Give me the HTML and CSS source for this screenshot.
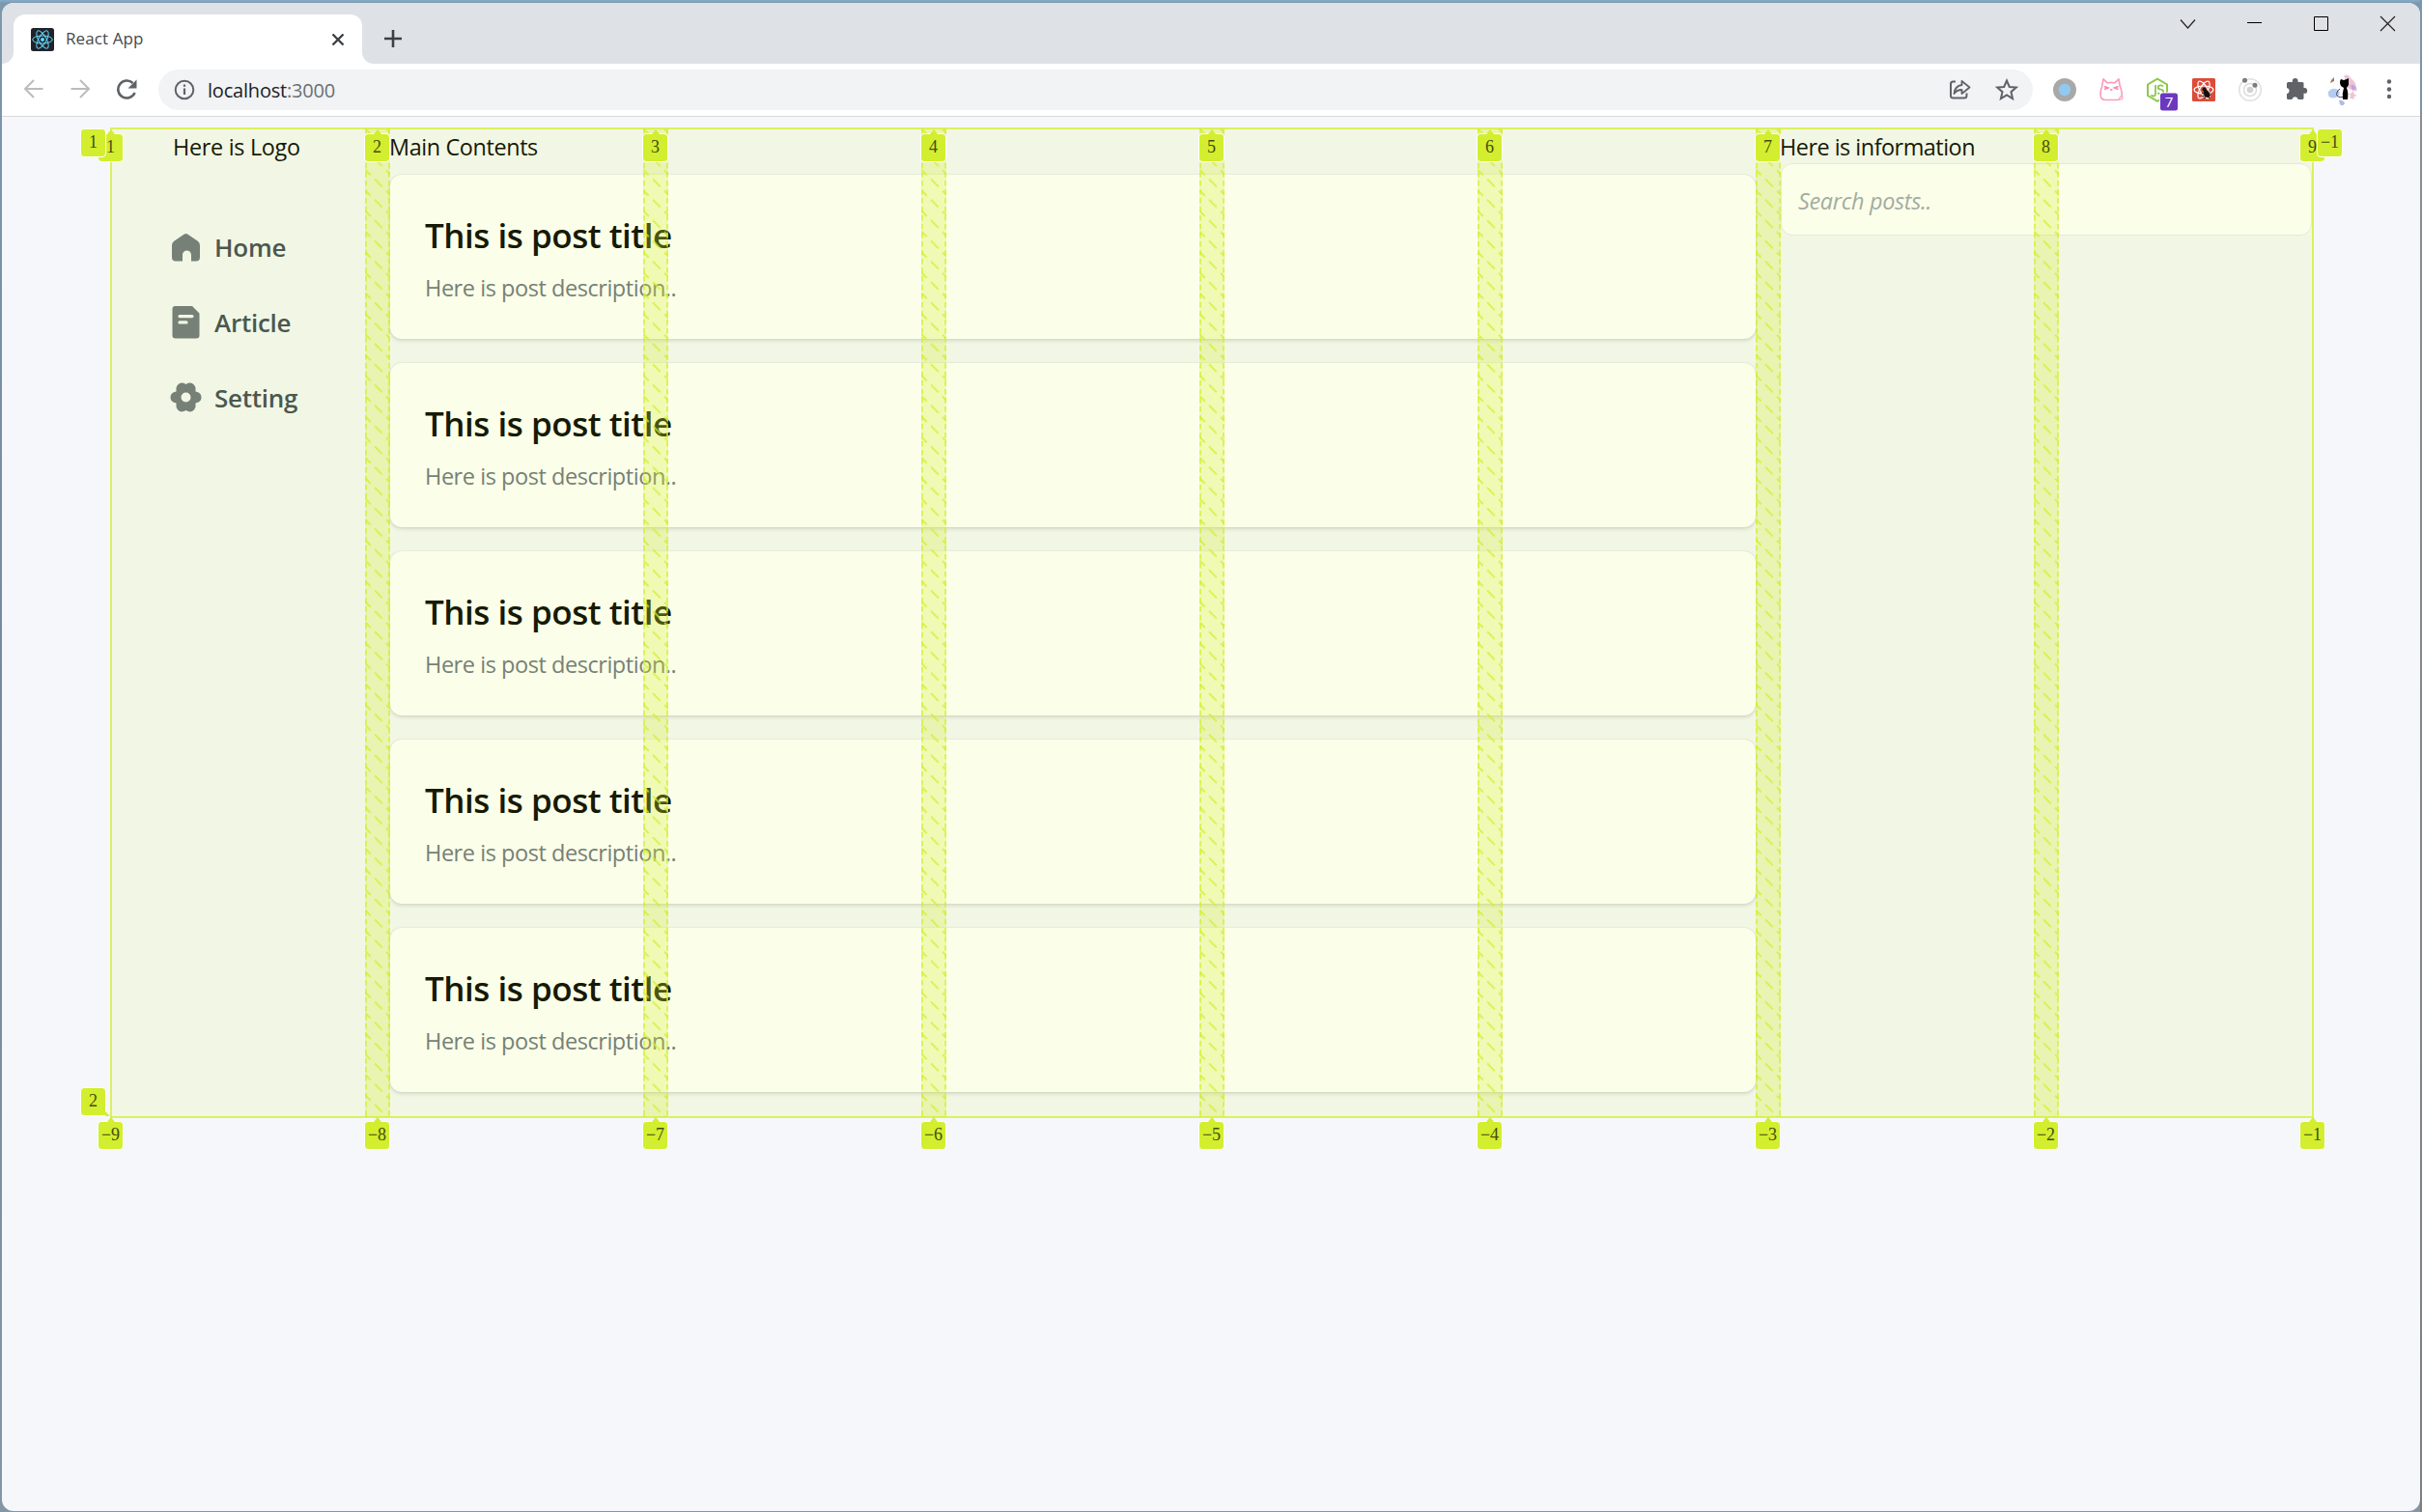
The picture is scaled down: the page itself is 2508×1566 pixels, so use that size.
FILE: index.html
```html
<!DOCTYPE html>
<html lang="en">
<head>
<meta charset="utf-8">
<title>React App</title>
<link rel="stylesheet" href="styles.css">
</head>
<body>
<div class="window">
  <header class="tabstrip">
    <div class="tab">
      <svg class="favicon" viewBox="0 0 24 24"><rect width="24" height="24" rx="2.5" fill="#20232a"/><g fill="none" stroke="#61dafb" stroke-width="1"><ellipse cx="12" cy="12" rx="10.3" ry="4"/><ellipse cx="12" cy="12" rx="10.3" ry="4" transform="rotate(60 12 12)"/><ellipse cx="12" cy="12" rx="10.3" ry="4" transform="rotate(120 12 12)"/></g><circle cx="12" cy="12" r="2" fill="#61dafb"/></svg>
      <span class="tab-title">React App</span>
      <svg class="tab-close" viewBox="0 0 14 14"><path d="M1.5 1.5l11 11M12.500 1.500l-11 11" stroke="#3c4043" stroke-width="2.400"/></svg>
    </div>
    <svg class="new-tab" viewBox="0 0 20 20"><path d="M10 1v18M1 10h18" stroke="#3c4043" stroke-width="2.600"/></svg>
    <div class="controls">
      <svg viewBox="0 0 69 48"><path d="M27 20.500l7.500 8.500 7.500-8.500" fill="none" stroke="#222" stroke-width="1.200"/></svg>
      <svg viewBox="0 0 69 48"><path d="M27 23.500h15" stroke="#000"/></svg>
      <svg viewBox="0 0 69 48"><path d="M27.500 17.500h14v14h-14z" fill="none" stroke="#000"/></svg>
      <svg viewBox="0 0 69 48"><path d="M27 17l15 15M42 17l-15 15" stroke="#222" stroke-width="1.200"/></svg>
    </div>
  </header>
  <nav class="toolbar">
    <svg viewBox="0 0 48 48"><path d="M33.500 23H15.500M24 14l-9 9 9 9" fill="none" stroke="#babcbe" stroke-width="2"/></svg>
    <svg viewBox="0 0 48 48"><path d="M14.500 23h18M24 14l9 9-9 9" fill="none" stroke="#babcbe" stroke-width="2"/></svg>
    <svg viewBox="0 0 48 48"><path d="M32.600 27A9 9 0 1 1 30.500 17" fill="none" stroke="#5f6368" stroke-width="2.500"/><path d="M34.500 13.500v9h-9z" fill="#5f6368"/></svg>
    <div class="omnibox">
      <svg viewBox="0 0 48 48"><circle cx="24" cy="24" r="9.300" fill="none" stroke="#5f6368" stroke-width="2"/><path d="M24 22.500v6.500M24 18.500v2.300" stroke="#5f6368" stroke-width="2.200"/></svg>
      <span class="url">localhost<span class="port">:3000</span></span>
      <svg viewBox="0 0 48 48"><path d="M19 15.500h-2.500a2.500 2.500 0 0 0-2.500 2.500v12a2.500 2.500 0 0 0 2.500 2.500h11.500a2.500 2.500 0 0 0 2.500-2.500v-2.500" fill="none" stroke="#5f6368" stroke-width="2"/><path d="M25.500 15l8 6.500-8 6.500v-4c-3 0-6 1-8 4 .5-5 3.500-8.500 8-9z" fill="none" stroke="#5f6368" stroke-width="1.800" stroke-linejoin="round"/></svg>
      <svg viewBox="0 0 48 48"><path d="M24 14.500l2.800 6.500 7 .6-5.300 4.600 1.600 6.900-6.100-3.700-6.100 3.700 1.600-6.900-5.300-4.600 7-.6z" fill="none" stroke="#5f6368" stroke-width="2"/></svg>
    </div>
    <svg viewBox="0 0 48 48"><circle cx="24" cy="24" r="12" fill="#a8a8a8"/><circle cx="24" cy="24" r="6.200" fill="#92c9ee"/></svg>
    <svg viewBox="0 0 48 48"><path d="M16 12.800l4.200 4q3.800-.8 7.600 0l4.200-4 1.300 7.500q3.500 9 .8 12.500-1 1.700-4 1.700H18q-3.500 0-4.500-3-1.200-5 1.200-11z" fill="none" stroke="#fc9dbc" stroke-width="1.700" stroke-linejoin="round"/><path d="M17 20.500l4 1.500-4 1.500M31.500 20.500l-4 1.500 4 1.500M23 24h2.500" fill="none" stroke="#fc7fa8" stroke-width="1.500"/><circle cx="34.500" cy="32.500" r="1.500" fill="#fff" stroke="#fc9dbc" stroke-width="1.200"/></svg>
    <svg viewBox="0 0 48 48"><path d="M24 12.700l10 5.800v11.500l-10 5.800-10-5.800V18.500z" fill="none" stroke="#8cc84b" stroke-width="2"/><path d="M22 19v9q0 2.500-2.300 2.500-1.700 0-1.700-1.500M30 20.500q-1-1.200-2.800-1.200-2.500 0-2.500 2.200 0 1.900 2.700 2.200 2.800.4 2.800 2.500 0 2.200-2.800 2.200-2 0-3-1.500" fill="none" stroke="#8cc84b" stroke-width="1.800"/><rect x="26" y="26.500" width="19" height="19" rx="3" fill="#fff"/><rect x="27" y="27.500" width="18" height="18" rx="2.500" fill="#6b38c0"/><text x="36" y="41.500" text-anchor="middle" class="badge-text">7</text></svg>
    <svg viewBox="0 0 48 48"><rect x="12" y="12" width="24" height="24" rx="1.500" fill="#dd4b39"/><g fill="none" stroke="#fff" stroke-width="1.200"><ellipse cx="24" cy="24" rx="10" ry="4"/><ellipse cx="24" cy="24" rx="10" ry="4" transform="rotate(60 24 24)"/><ellipse cx="24" cy="24" rx="10" ry="4" transform="rotate(120 24 24)"/></g><ellipse cx="27" cy="28" rx="2.800" ry="4.200" transform="rotate(-25 27 28)" fill="#111"/><circle cx="24.500" cy="23.500" r="2" fill="#111"/><path d="M22 27.500l9 2M22.500 31l8-4M25 33l1-6M30 33l-2-5" stroke="#111" stroke-width="1"/></svg>
    <svg viewBox="0 0 48 48"><circle cx="24" cy="24" r="11.300" fill="none" stroke="#e0e0e0" stroke-width="1.500"/><circle cx="24" cy="24" r="6.500" fill="none" stroke="#dcdcdc" stroke-width="1.500"/><circle cx="24" cy="24" r="3.300" fill="#d3d3d3"/><circle cx="18.500" cy="14.300" r="2.500" fill="#7b7b7b"/><circle cx="29" cy="19.300" r="2.500" fill="#7b7b7b"/></svg>
    <svg viewBox="0 0 48 48"><path d="M14 17.500q0-1.500 1.500-1.500h4.300v-1a2.900 2.900 0 0 1 5.800 0v1h4.400q1.500 0 1.500 1.500v4.500h.8a2.900 2.900 0 0 1 0 5.800h-.8v4.700q0 1.500-1.500 1.500h-4.300a3.200 3.200 0 0 0-6.300 0h-3.900q-1.500 0-1.500-1.500v-4.300a3.200 3.200 0 0 0 0-6.300z" fill="#5f6368"/></svg>
    <svg viewBox="0 0 48 48"><path d="M8.500 27q3-5 8-4 5 1 4 6-5 6-11 2z" fill="#b3cdf0"/><path d="M25 9.500q5-2.500 7 2.500 5 3 6 9 1 3 0 5-4-3-6-2-5-3-5-10z" fill="#ecc3da"/><path d="M32 19q4-1 6 4l-4 2z" fill="#c5a4d8"/><path d="M31 33l1-3-2-2 3-.5 2-3 .5 4 3 1-3 2 0 3-2-1.500z" fill="#f0c5ce"/><path d="M20 35q4-1 6 3-2 4-5 1z" fill="#aebde4"/><path d="M12 14l3-3v4l-4 2z" fill="#a27862"/><path d="M25 31.500q-7 1-7.500-3 .5-4 3.500-5.500" fill="none" stroke="#445" stroke-width="1"/><path d="M22 13l3 1 3-1 2-1v7l-2 3q2 5 1 12h-5q-1-6 1-12l-3-2q-2-4-0-7z" fill="#000"/></svg>
    <svg viewBox="0 0 48 48"><g fill="#5f6368"><circle cx="24" cy="15.500" r="2.200"/><circle cx="24" cy="23.500" r="2.200"/><circle cx="24" cy="31" r="2.200"/></g></svg>
  </nav>
  <main class="page">
    <div class="layout">
      <aside class="sidebar">
        <p class="heading logo">Here is Logo</p>
        <ul class="menu">
          <li><svg viewBox="0 0 33 36"><path d="M14.500 4.700q2-1.400 4 0l10 6.800q2.500 1.700 2.500 4.500v12.500q0 4-4 4h-5V26a4.500 4.500 0 0 0-9 0v6.500H6q-4 0-4-4V16q0-2.800 2.500-4.500z"/></svg><span>Home</span></li>
          <li><svg viewBox="0 0 33 36"><path fill-rule="evenodd" d="M5.500 1H23l7.500 7.500v23q0 3-3 3h-22q-3 0-3-3V4q0-3 3-3zM10 10a1.600 1.600 0 0 0 0 3.200h13a1.600 1.600 0 0 0 0-3.200zM10 16.300a1.600 1.600 0 0 0 0 3.200h7a1.600 1.600 0 0 0 0-3.200z"/></svg><span>Article</span></li>
          <li><svg viewBox="0 0 33 36"><path fill-rule="evenodd" d="M6.500 7.500Q8 3 12 2.600q2.300 0 4.500 1.400 2.200-1.400 4.500-1.400 4 .4 5.500 4.900v4q6 .8 6 6t-6 6v4q-1.500 4.500-5.500 4.900-2.300 0-4.500-1.400-2.200 1.400-4.500 1.400-4-.4-5.500-4.900v-4q-6-.8-6-6t6-6zM16.500 12.500a5 5 0 1 0 0 10 5 5 0 1 0 0-10z"/></svg><span>Setting</span></li>
        </ul>
      </aside>
      <section class="posts">
        <p class="heading">Main Contents</p>
        <article class="card"><h2>This is post title</h2><p>Here is post description..</p></article>
        <article class="card"><h2>This is post title</h2><p>Here is post description..</p></article>
        <article class="card"><h2>This is post title</h2><p>Here is post description..</p></article>
        <article class="card"><h2>This is post title</h2><p>Here is post description..</p></article>
        <article class="card"><h2>This is post title</h2><p>Here is post description..</p></article>
      </section>
      <aside class="info">
        <p class="heading">Here is information</p>
        <div class="search">Search posts..</div>
      </aside>
      <svg class="overlay" viewBox="0 0 2282 1026">
        <defs>
          <pattern id="hatch" width="26" height="21.300" patternUnits="userSpaceOnUse"><path d="M-2-23.300L28 6.700M-2-2L28 28" stroke="#d3ee2e" stroke-opacity=".75" stroke-width="2" stroke-dasharray="11 6"/></pattern>
          <g id="gutter"><path d="M0 0h26v1024H0z" fill="#d3ee2e" fill-opacity=".28"/><path d="M0 0h26v1024H0z" fill="url(#hatch)"/><path d="M1 0v1024M25 0v1024" stroke="#d3ee2e" stroke-opacity=".8" stroke-width="1.700" stroke-dasharray="5.500 3.500"/></g>
        </defs>
        <path d="M1 1h2280v1024H1z" fill="#d8ff2a" fill-opacity=".1" stroke="#d3ee2e" stroke-opacity=".75" stroke-width="2"/>
        <use href="#gutter" x="264" y="1"/><use href="#gutter" x="552" y="1"/><use href="#gutter" x="840" y="1"/><use href="#gutter" x="1128" y="1"/><use href="#gutter" x="1416" y="1"/><use href="#gutter" x="1704" y="1"/><use href="#gutter" x="1992" y="1"/>
      </svg>
      <div class="lines top"><b>1</b><b>2</b><b>3</b><b>4</b><b>5</b><b>6</b><b>7</b><b>8</b><b>9</b></div>
      <div class="lines bottom"><b>−9</b><b>−8</b><b>−7</b><b>−6</b><b>−5</b><b>−4</b><b>−3</b><b>−2</b><b>−1</b></div>
      <b class="row first">1</b>
      <b class="row second">2</b>
      <b class="row end">−1</b>
    </div>
  </main>
</div>
</body>
</html>
```
FILE: styles.css
```css
* { box-sizing: border-box; }
body {
  margin: 0;
  height: 1566px;
  padding: 3px 2px 1px;
  background: linear-gradient(#7b98ad, #7f93a3 112px, #8c8f91 113px, #7d7f80) right / 2px 100% no-repeat,
    linear-gradient(#84a9c5 0 1px, #7b98ad 3px, #75889b 50%, #8496a3);
  font-family: "Open Sans", "Noto Sans", sans-serif;
  overflow: hidden;
}
svg { display: block; flex: none; }
p, h2, ul { margin: 0; padding: 0; }
.window {
  height: 1562px;
  border-radius: 12px;
  overflow: hidden;
  background: #f5f7fb;
}
.tabstrip {
  display: flex;
  height: 63px;
  padding: 12px 0 0 12px;
  background: #dee1e6;
}
.tab {
  position: relative;
  display: flex;
  align-items: center;
  width: 361px;
  height: 51px;
  padding: 0 18px;
  border-radius: 12px 12px 0 0;
  background: #fff;
}
.tab::before, .tab::after {
  content: "";
  position: absolute;
  bottom: 0;
  width: 12px;
  height: 12px;
}
.tab::before { left: -12px; background: radial-gradient(circle at 0 0, transparent 11.5px, #fff 12.5px); }
.tab::after { right: -12px; background: radial-gradient(circle at 100% 0, transparent 11.5px, #fff 12.5px); }
.favicon { width: 24px; height: 24px; }
.tab-title {
  flex: 1;
  margin-left: 12px;
  padding-bottom: 2px;
  font-size: 17px;
  letter-spacing: .09px;
  color: #45494d;
}
.tab-close { width: 14px; height: 14px; }
.new-tab { width: 20px; height: 20px; margin: 15px 0 0 22px; }
.controls { display: flex; margin: -12px -1px 0 auto; }
.controls svg { width: 69px; height: 48px; margin-top: -3px; }
.toolbar {
  display: flex;
  align-items: center;
  height: 55px;
  padding: 0 8px 0 9px;
  border-bottom: 1px solid #d9dade;
  background: #fff;
}
.toolbar svg { width: 48px; height: 48px; }
.omnibox {
  display: flex;
  align-items: center;
  flex: 1;
  height: 42px;
  margin: 0 9px;
  padding: 0 3px;
  border-radius: 21px;
  background: #f1f3f4;
}
.url { flex: 1; font-size: 20px; letter-spacing: -.2px; color: #202124; }
.port { color: #6b6f73; letter-spacing: -.2px; }
.badge-text { font: 15px "Open Sans", sans-serif; fill: #fff; }

.page { padding: 12px 113px 0; }
.layout {
  position: relative;
  display: grid;
  grid-template-columns: 263px 1414px 550px;
  column-gap: 26px;
  height: 1024px;
}
.heading {
  height: 36px;
  margin-left: -1px;
  padding-top: 3px;
  font-size: 23.4px;
  line-height: 32px;
  letter-spacing: -.38px;
  color: #000;
  white-space: nowrap;
}
.logo { padding-left: 65px; letter-spacing: -.3px; }
.menu { list-style: none; padding: 48px 0 0 61px; }
.menu li { display: flex; align-items: center; gap: 13px; height: 78px; }
.menu svg { width: 33px; height: 36px; fill: #6b7280; }
.menu span { font-size: 26px; font-weight: 600; letter-spacing: -.25px; color: #3c4654; }
.posts { display: flex; flex-direction: column; gap: 25px; }
.posts .heading { margin-bottom: -13px; }
.card {
  height: 170px;
  padding: 38px 36px;
  border-radius: 12px;
  background: #fff;
  box-shadow: 0 2px 4px rgba(0, 0, 0, .13), 0 0 2px rgba(0, 0, 0, .12);
}
.card h2 { font-size: 35px; line-height: 50px; font-weight: 600; letter-spacing: -.48px; color: #000; }
.card p { margin-top: 13px; font-size: 23.5px; line-height: 32px; letter-spacing: -.45px; color: #6b7280; }
.info .heading { letter-spacing: -.49px; }
.search {
  height: 75px;
  padding: 0 17px;
  border: 1px solid #e5e7eb;
  border-radius: 12px;
  background: #fff;
  font-size: 23.4px;
  font-style: italic;
  line-height: 77px;
  letter-spacing: -.3px;
  color: #9ca3af;
}
.overlay { position: absolute; left: -1px; top: -1px; width: 2282px; height: 1026px; }
.lines {
  position: absolute;
  left: -14px;
  display: grid;
  grid-template-columns: 276px repeat(6, 288px) 276px 27px;
}
.lines.top { top: 5px; }
.lines.bottom { top: 1028px; }
.lines b, .row {
  position: relative;
  width: 27px;
  height: 30px;
  border: 1px solid #fff;
  border-radius: 4px;
  background: #d3ee2e;
  font: 18px/27px "Liberation Serif", serif;
  text-align: center;
  color: #454d10;
}
.lines b::before {
  content: "";
  position: absolute;
  left: 9px;
  top: -5px;
  border: 4px solid transparent;
  border-top: 0;
  border-bottom: 5px solid #d3ee2e;
}
.row { position: absolute; }
.row.first { left: -32px; top: 0; }
.row.second { left: -32px; top: 993px; border-bottom-right-radius: 0; }
.row.second::after {
  content: "";
  position: absolute;
  right: -5px;
  bottom: -1px;
  border-left: 5px solid #d3ee2e;
  border-top: 5px solid transparent;
}
.row.end { left: 2284px; top: 0; }
```
